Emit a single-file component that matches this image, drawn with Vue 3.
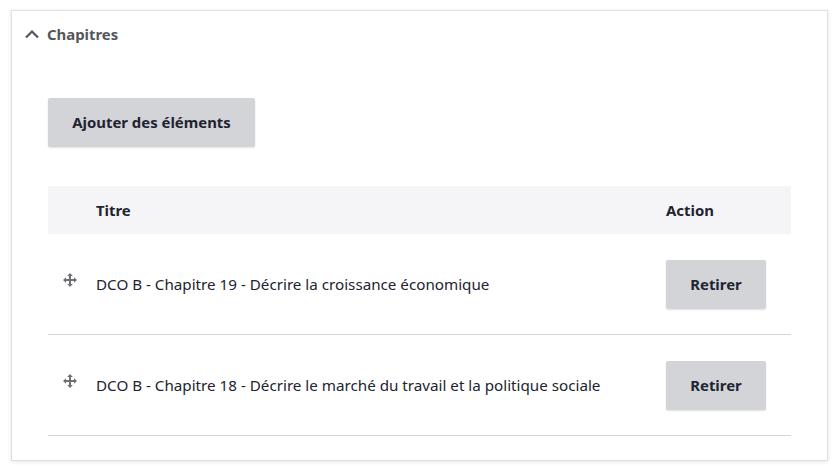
<template>
  <div class="page">
    <section class="panel">
      <header class="panel-head">
        <svg class="chevron" width="16" height="14" viewBox="0 0 16 14">
          <path d="M2 10.5 L8 4.5 L14 10.5" fill="none" stroke="#55565b" stroke-width="2.2" />
        </svg>
        <span>Chapitres</span>
      </header>

      <div class="panel-body">
        <button class="btn btn-add">Ajouter des éléments</button>

        <table class="items">
          <thead>
            <tr>
              <th class="col-drag"></th>
              <th>Titre</th>
              <th class="col-action">Action</th>
            </tr>
          </thead>
          <tbody>
            <tr v-for="item in items" :key="item">
              <td class="col-drag">
                <svg class="drag" width="14" height="14" viewBox="0 0 14 14" fill="#6f7075">
                  <path d="M7 0 L9.8 3 H8 V6 H11 V4.2 L14 7 L11 9.8 V8 H8 V11 H9.8 L7 14 L4.2 11 H6 V8 H3 V9.8 L0 7 L3 4.2 V6 H6 V3 H4.2 Z" />
                </svg>
              </td>
              <td class="title">{{ item }}</td>
              <td class="col-action">
                <button class="btn btn-remove">Retirer</button>
              </td>
            </tr>
          </tbody>
        </table>
      </div>
    </section>
  </div>
</template>

<script setup>
const items = [
  'DCO B - Chapitre 19 - Décrire la croissance économique',
  'DCO B - Chapitre 18 - Décrire le marché du travail et la politique sociale'
]
</script>

<style scoped>
.page {
  padding: 10px 11px 0 11px;
  width: 840px;
  height: 470px;
  box-sizing: border-box;
  overflow: hidden;
  font-family: "Noto Sans", "Open Sans", sans-serif;
  color: #222330;
}

.panel {
  width: 817px;
  height: 451px;
  box-sizing: border-box;
  border: 1px solid #dedfe4;
  box-shadow: 0 1px 4px rgba(0, 0, 0, 0.1);
  background: #fff;
}

.panel-head {
  display: flex;
  align-items: center;
  gap: 7px;
  height: 45px;
  padding-left: 12px;
  font-size: 14.9px;
  font-weight: 700;
  color: #55565b;
}

.panel-body {
  padding: 42px 36px 0 36px;
}

.btn {
  display: block;
  border: 0;
  border-radius: 2px;
  background: #d3d4d8;
  color: #222330;
  font-family: inherit;
  font-weight: 700;
  font-size: 14.9px;
  box-shadow: 0 1px 2px rgba(0, 0, 0, 0.12);
}

.btn-add {
  width: 207px;
  height: 49px;
  padding: 0 0 2px;
}

.btn-remove {
  width: 100px;
  height: 49px;
  padding: 0;
}

.items {
  width: 743px;
  margin-top: 39px;
  border-collapse: collapse;
  table-layout: fixed;
  font-size: 15.2px;
}

th {
  height: 48px;
  padding: 0;
  background: #f5f5f7;
  text-align: left;
  font-weight: 700;
  font-size: 14.9px;
}

td {
  height: 100px;
  padding: 0;
  border-bottom: 1px solid #d3d4d8;
}

.col-drag {
  width: 48px;
}

.col-action {
  width: 125px;
}

td.col-drag {
  vertical-align: top;
  padding-top: 39px;
  padding-left: 15px;
  box-sizing: border-box;
}

.drag {
  display: block;
}
</style>

<style>
body {
  background: #fff;
}
</style>
